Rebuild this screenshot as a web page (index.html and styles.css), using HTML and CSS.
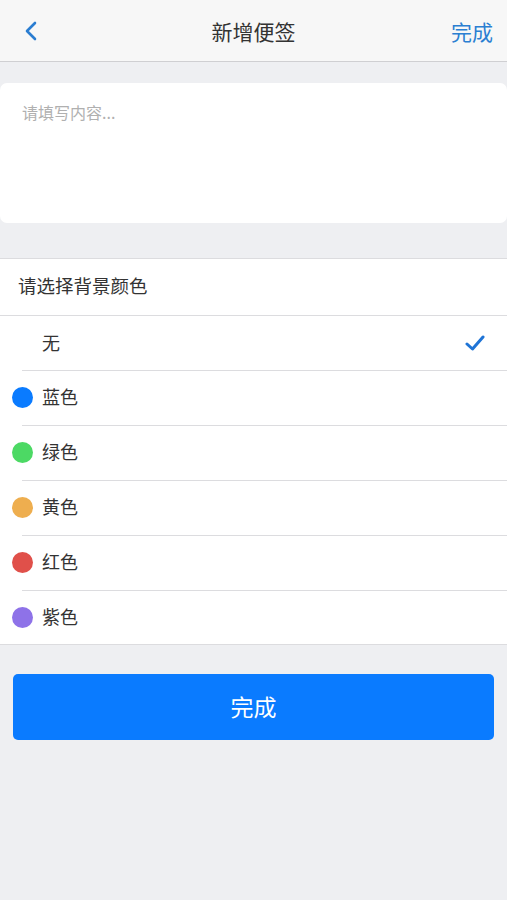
FILE: index.html
```html
<!DOCTYPE html>
<html lang="zh-CN">
<head>
  <meta charset="UTF-8">
  <meta name="viewport" content="width=device-width, initial-scale=1.0">
  <title>新增便签</title>
  <link rel="stylesheet" href="styles.css">
</head>
<body>
  <div class="navbar">
    <span class="nav-back">
      <svg width="16" height="20" viewBox="0 0 16 20"><path d="M11 2 L3 10 L11 18" fill="none" stroke="#2a7dd1" stroke-width="2.6" stroke-linecap="round" stroke-linejoin="round"/></svg>
    </span>
    <h1 class="nav-title">新增便签</h1>
    <span class="nav-done">完成</span>
  </div>

  <div class="content">
    <textarea class="note-input" placeholder="请填写内容..."></textarea>

    <div class="color-list">
      <div class="list-head">请选择背景颜色</div>
      <div class="color-item">
        <span class="dot dot-none"></span>
        <span class="color-name">无</span>
        <svg class="check" width="20" height="16" viewBox="0 0 20 16"><path d="M2 9 L7.5 14 L18 2" fill="none" stroke="#1f74d6" stroke-width="3" stroke-linecap="round" stroke-linejoin="round"/></svg>
      </div>
      <div class="color-item">
        <span class="dot dot-blue"></span>
        <span class="color-name">蓝色</span>
      </div>
      <div class="color-item">
        <span class="dot dot-green"></span>
        <span class="color-name">绿色</span>
      </div>
      <div class="color-item">
        <span class="dot dot-yellow"></span>
        <span class="color-name">黄色</span>
      </div>
      <div class="color-item">
        <span class="dot dot-red"></span>
        <span class="color-name">红色</span>
      </div>
      <div class="color-item">
        <span class="dot dot-purple"></span>
        <span class="color-name">紫色</span>
      </div>
    </div>

    <button class="submit-btn">完成</button>
  </div>
</body>
</html>
```

FILE: styles.css
```css
body {
  font-family: "Noto Sans CJK SC", "Noto Sans", sans-serif;
  margin: 0;
  padding: 0;
  background-color: #eeeff2;
  color: #333;
}
.navbar {
  height: 61px;
  background: #f7f7f7;
  border-bottom: 1px solid #cfcfd2;
  display: flex;
  align-items: center;
  justify-content: space-between;
  padding: 0 14px 0 24px;
}
.nav-back {
  width: 60px;
  display: flex;
  align-items: center;
}
.nav-title {
  margin: 0;
  font-size: 21px;
  font-weight: normal;
  color: #333;
}
.nav-done {
  width: 70px;
  text-align: right;
  font-size: 21px;
  color: #2b7fd2;
}
.content {
  padding-top: 21px;
}
.note-input {
  display: block;
  box-sizing: border-box;
  width: 100%;
  height: 140px;
  margin: 0;
  padding: 17px 22px;
  border: none;
  border-radius: 7px;
  background: #fff;
  font-family: inherit;
  font-size: 16px;
  color: #333;
  resize: none;
  outline: none;
}
.note-input::placeholder {
  color: #b0b0b0;
}
.color-list {
  margin-top: 35px;
  background: #fff;
  border-top: 1px solid #dcdcdf;
  border-bottom: 1px solid #dcdcdf;
}
.list-head {
  height: 56px;
  line-height: 52px;
  padding-left: 18px;
  font-size: 18.5px;
  border-bottom: 1px solid #dcdcdf;
}
.color-item {
  height: 53px;
  display: flex;
  align-items: center;
  padding-left: 12px;
  padding-right: 22px;
  position: relative;
}
.color-item + .color-item::before {
  content: "";
  position: absolute;
  top: 0;
  left: 22px;
  right: 0;
  border-top: 1px solid #dcdcdf;
}
.color-item + .color-item {
  border-top: 1px solid transparent;
  height: 54px;
}
.dot {
  width: 21px;
  height: 21px;
  border-radius: 50%;
  margin-right: 9px;
}
.dot-none { background: transparent; }
.dot-blue { background: #0a7bff; }
.dot-green { background: #4cd964; }
.dot-yellow { background: #eeae4f; }
.dot-red { background: #e0504a; }
.dot-purple { background: #8e72e8; }
.color-name {
  flex: 1;
  font-size: 18px;
  color: #333;
  padding-bottom: 2px;
}
.check {
  display: block;
}
.submit-btn {
  display: block;
  width: calc(100% - 26px);
  height: 66px;
  margin: 29px 13px 0;
  padding-bottom: 4px;
  border: none;
  border-radius: 5px;
  background-color: #0a7bff;
  color: #fff;
  font-family: inherit;
  font-size: 23px;
  cursor: pointer;
}
```
